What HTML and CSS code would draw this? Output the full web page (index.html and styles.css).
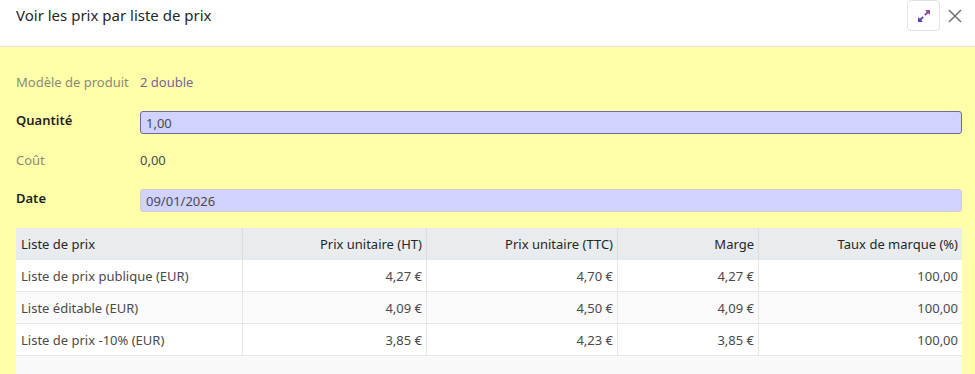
FILE: index.html
```html
<!DOCTYPE html>
<html lang="fr">
<head>
    <meta charset="UTF-8">
    <title>Voir les prix par liste de prix</title>
    <link rel="stylesheet" href="styles.css">
</head>
<body>
    <div class="modal">
        <div class="modal-header">
            <h4 class="modal-title">Voir les prix par liste de prix</h4>
            <div class="header-actions">
                <button class="expand-btn" title="Agrandir">
                    <svg width="14" height="14" viewBox="0 0 14 14">
                        <defs>
                            <linearGradient id="g" x1="0" y1="1" x2="1" y2="0">
                                <stop offset="0" stop-color="#4a3fb8"/>
                                <stop offset="1" stop-color="#a3479c"/>
                            </linearGradient>
                        </defs>
                        <path d="M8 1h5v5l-1.8-1.8-2.6 2.6-1.4-1.4 2.6-2.6zM6 13H1V8l1.8 1.8 2.6-2.6 1.4 1.4-2.6 2.6z" fill="url(#g)"/>
                    </svg>
                </button>
                <button class="close-btn" title="Fermer">
                    <svg width="14" height="14" viewBox="0 0 14 14">
                        <path d="M1 1L13 13M13 1L1 13" stroke="#707070" stroke-width="1.5"/>
                    </svg>
                </button>
            </div>
        </div>

        <div class="modal-body">
            <div class="field-row">
                <div class="field-label muted">Modèle de produit</div>
                <div class="field-value link">2 double</div>
            </div>
            <div class="field-row input-row">
                <div class="field-label strong">Quantité</div>
                <input class="field-input focused" type="text" value="1,00">
            </div>
            <div class="field-row">
                <div class="field-label muted">Coût</div>
                <div class="field-value">0,00</div>
            </div>
            <div class="field-row input-row">
                <div class="field-label strong">Date</div>
                <input class="field-input" type="text" value="09/01/2026">
            </div>

            <table class="price-table">
                <thead>
                    <tr>
                        <th class="col-name">Liste de prix</th>
                        <th class="num col-ht">Prix unitaire (HT)</th>
                        <th class="num col-ttc">Prix unitaire (TTC)</th>
                        <th class="num col-marge">Marge</th>
                        <th class="num">Taux de marque (%)</th>
                    </tr>
                </thead>
                <tbody>
                    <tr>
                        <td>Liste de prix publique (EUR)</td>
                        <td class="num">4,27 €</td>
                        <td class="num">4,70 €</td>
                        <td class="num">4,27 €</td>
                        <td class="num">100,00</td>
                    </tr>
                    <tr>
                        <td>Liste éditable (EUR)</td>
                        <td class="num">4,09 €</td>
                        <td class="num">4,50 €</td>
                        <td class="num">4,09 €</td>
                        <td class="num">100,00</td>
                    </tr>
                    <tr>
                        <td>Liste de prix -10% (EUR)</td>
                        <td class="num">3,85 €</td>
                        <td class="num">4,23 €</td>
                        <td class="num">3,85 €</td>
                        <td class="num">100,00</td>
                    </tr>
                </tbody>
            </table>
            <div class="table-filler"></div>
        </div>
    </div>
</body>
</html>
```

FILE: styles.css
```css
body {
    margin: 0;
    font-family: 'Noto Sans', sans-serif;
    font-size: 13px;
    color: #4a4a4a;
    background-color: #fff;
}
.modal {
    width: 975px;
    height: 374px;
    overflow: hidden;
}
.modal-header {
    display: flex;
    justify-content: space-between;
    align-items: flex-start;
    height: 47px;
    box-sizing: border-box;
    border-bottom: 1px solid #e4e4e4;
    padding: 0 13px 0 16px;
    background-color: #fff;
}
.modal-title {
    margin: 5px 0 0;
    font-size: 15px;
    font-weight: normal;
    color: #262626;
}
.header-actions {
    display: flex;
    align-items: flex-start;
    gap: 7px;
}
.expand-btn {
    width: 33px;
    height: 31px;
    box-sizing: border-box;
    border: 1px solid #e2e2e2;
    border-radius: 4px;
    background-color: #fff;
    display: flex;
    align-items: center;
    justify-content: center;
    padding: 0;
}
.close-btn {
    border: none;
    background: none;
    padding: 0;
    margin-top: 8px;
    width: 15px;
    height: 15px;
    display: flex;
    align-items: center;
    justify-content: center;
}
.modal-body {
    background-color: #ffffaa;
    padding: 23px 13px 0 16px;
    height: 327px;
    box-sizing: border-box;
}
.field-row {
    display: flex;
    align-items: center;
    min-height: 24px;
    margin-bottom: 12px;
}
.field-row.input-row {
    align-items: flex-start;
    padding-top: 5px;
    padding-bottom: 1px;
}
.field-label {
    width: 124px;
    flex-shrink: 0;
}
.field-label.muted {
    color: #8a8a7a;
}
.field-label.strong {
    color: #1f1f1f;
    font-weight: 600;
}
.field-value {
    color: #4a4a4a;
}
.field-value.link {
    color: #75688f;
}
.field-input {
    flex: 1;
    height: 23px;
    box-sizing: border-box;
    background-color: #d2d2ff;
    border: 1px solid #cfcfc6;
    border-radius: 3px;
    padding: 0 5px;
    font-family: inherit;
    font-size: 13px;
    color: #4a4a4a;
    outline: none;
}
.field-input.focused {
    border-color: #6e6a9e;
}
.price-table {
    width: 946px;
    margin-top: 14px;
    border-collapse: collapse;
    background-color: #fff;
}
.price-table th,
.price-table td {
    height: 31px;
    padding: 0 4px 0 5px;
    text-align: left;
    border-bottom: 1px solid #e6e6e6;
    border-right: 1px solid #e6e6e6;
}
.price-table th:last-child,
.price-table td:last-child {
    border-right: none;
}
.price-table th {
    background-color: #e9ecef;
    color: #262626;
    font-weight: normal;
    border-right-color: #dcdcdc;
}
.price-table tbody tr:nth-child(2) {
    background-color: #fafafa;
}
.price-table .num {
    text-align: right;
}
.col-name {
    width: 217px;
}
.col-ht {
    width: 174px;
}
.col-ttc {
    width: 181px;
}
.col-marge {
    width: 131px;
}
.table-filler {
    width: 946px;
    height: 40px;
    background-color: #f9f9f9;
}
```
